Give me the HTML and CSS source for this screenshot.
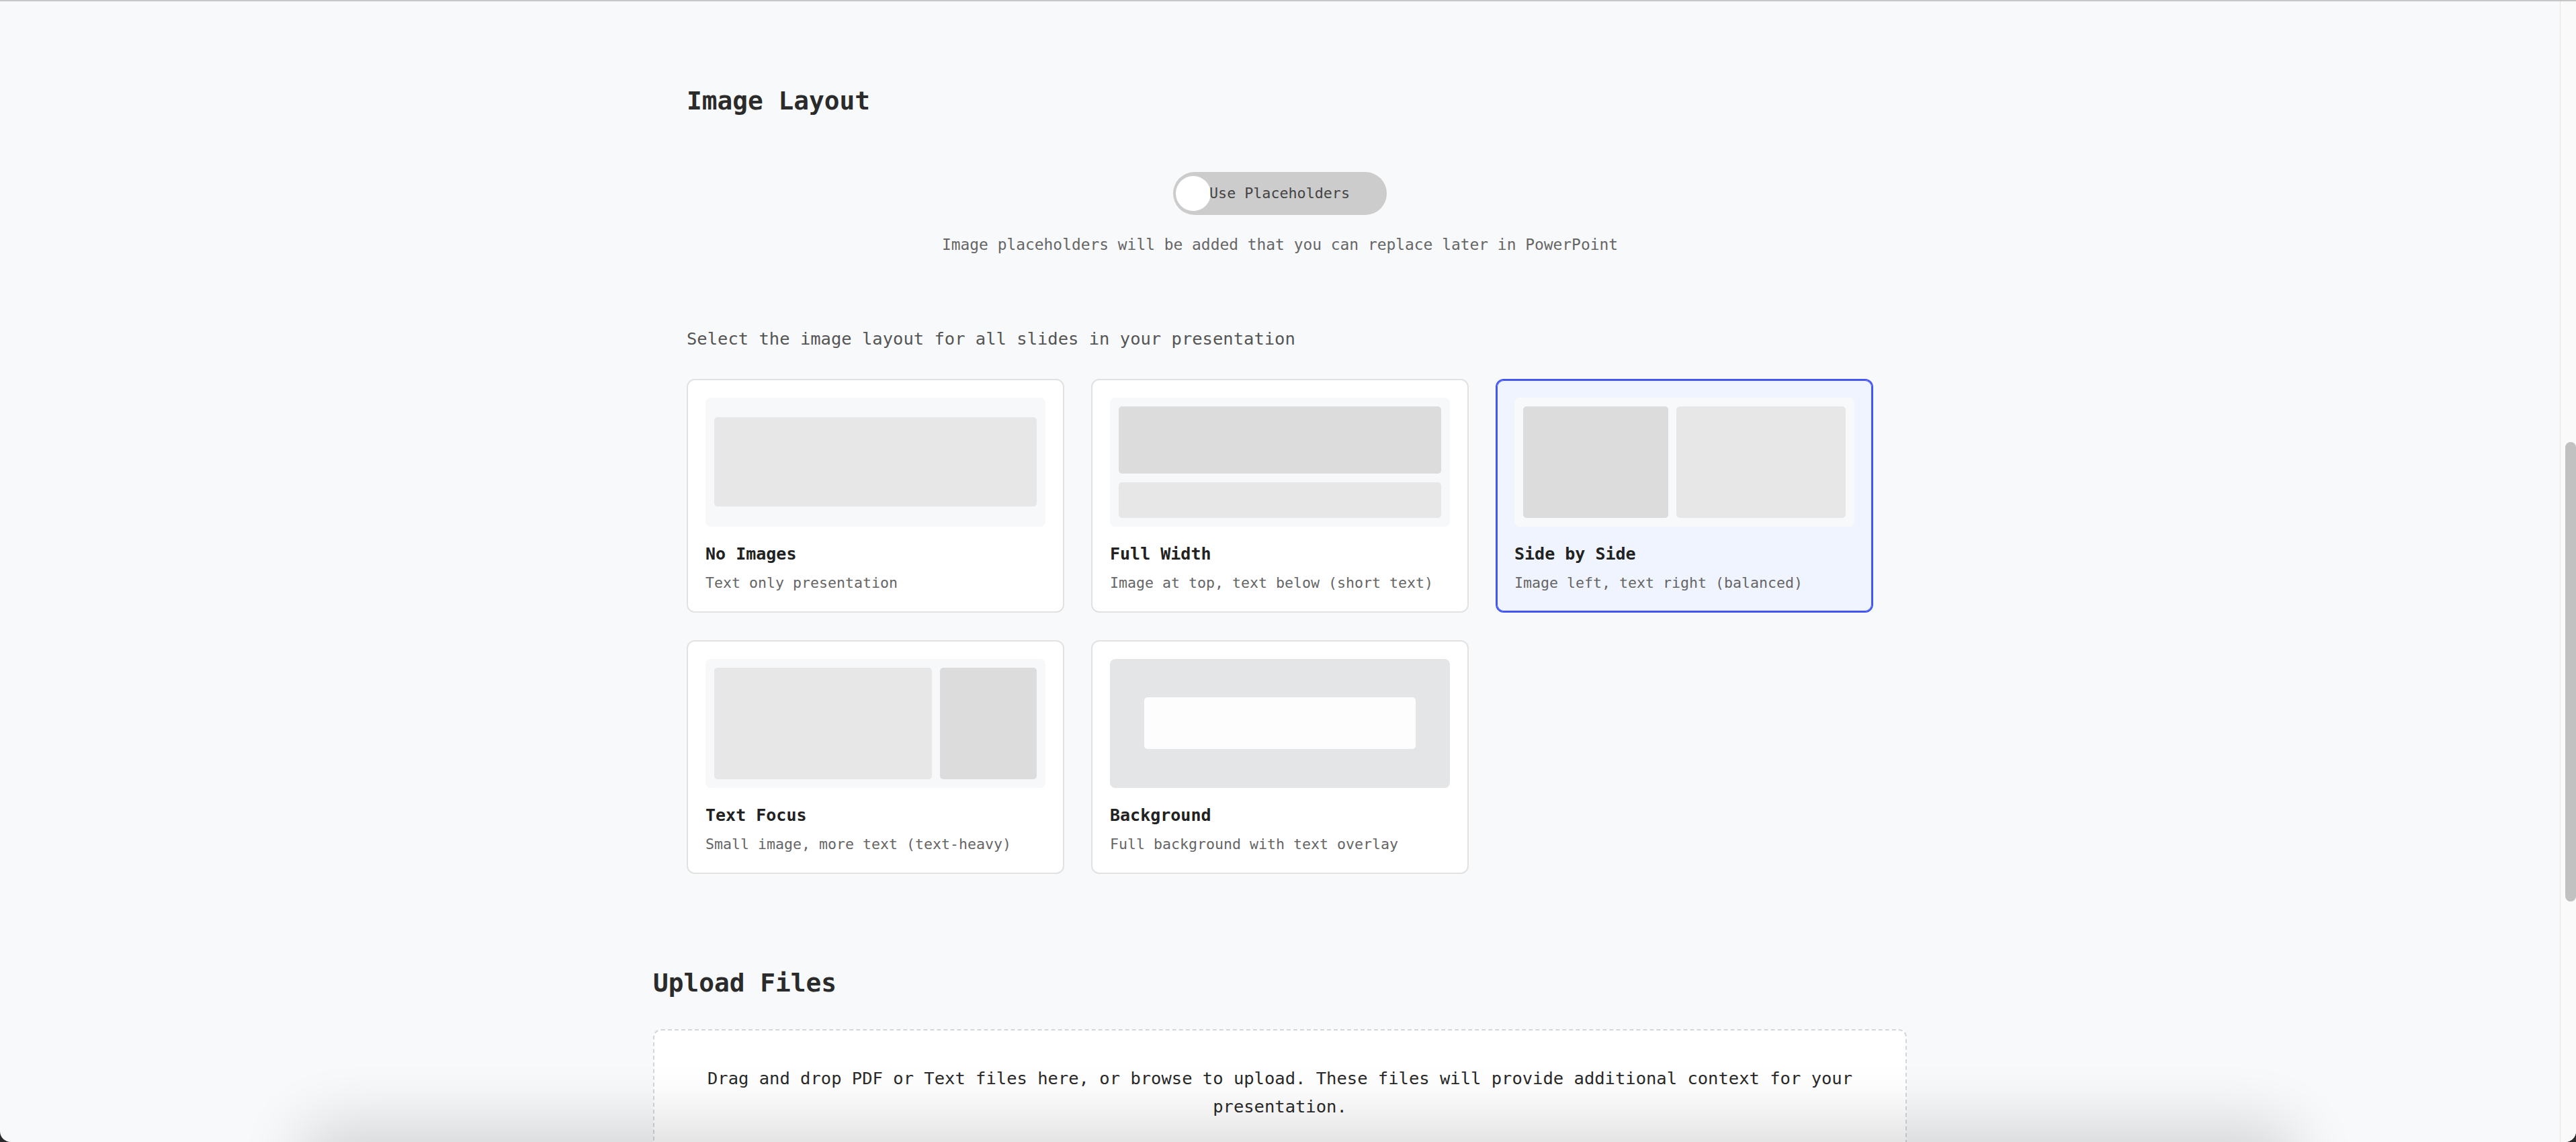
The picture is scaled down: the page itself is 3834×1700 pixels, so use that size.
FILE: index.html
```html
<!DOCTYPE html>
<html lang="en">
<head>
<meta charset="utf-8">
<title>Image Layout</title>
<link rel="stylesheet" href="styles.css">
</head>
<body>
<div class="window">
  <div class="viewport">
    <main class="content">
      <section class="image-layout">
        <h2 class="section-title">Image Layout</h2>
        <div class="toggle-row">
          <div class="toggle">
            <span class="knob"></span>
            <span class="toggle-label">Use Placeholders</span>
          </div>
        </div>
        <p class="toggle-hint">Image placeholders will be added that you can replace later in PowerPoint</p>
        <p class="select-label">Select the image layout for all slides in your presentation</p>
        <div class="layout-grid">
          <div class="card">
            <div class="preview preview-none">
              <div class="blk light full"></div>
            </div>
            <div class="card-title">No Images</div>
            <div class="card-desc">Text only presentation</div>
          </div>
          <div class="card">
            <div class="preview preview-col">
              <div class="blk dark top-img"></div>
              <div class="blk light grow"></div>
            </div>
            <div class="card-title">Full Width</div>
            <div class="card-desc">Image at top, text below (short text)</div>
          </div>
          <div class="card selected">
            <div class="preview">
              <div class="blk dark side-img"></div>
              <div class="blk light grow"></div>
            </div>
            <div class="card-title">Side by Side</div>
            <div class="card-desc">Image left, text right (balanced)</div>
          </div>
          <div class="card">
            <div class="preview">
              <div class="blk light grow"></div>
              <div class="blk dark small-img"></div>
            </div>
            <div class="card-title">Text Focus</div>
            <div class="card-desc">Small image, more text (text-heavy)</div>
          </div>
          <div class="card">
            <div class="preview preview-bg">
              <div class="overlay"></div>
            </div>
            <div class="card-title">Background</div>
            <div class="card-desc">Full background with text overlay</div>
          </div>
        </div>
      </section>
      <section class="upload">
        <h2 class="section-title">Upload Files</h2>
        <div class="dropzone">
          <p class="drop-text">Drag and drop PDF or Text files here, or browse to upload. These files will provide additional context for your presentation.</p>
        </div>
      </section>
    </main>
  </div>
  <div class="scrollbar"><div class="thumb"></div></div>
  <div class="dock-shadow"></div>
</div>
</body>
</html>
```
FILE: styles.css
```css
html, body {
  margin: 0;
  padding: 0;
  height: 100%;
  background: #2a2a2c;
}

body {
  font-family: "DejaVu Sans Mono", "Liberation Mono", monospace;
  color: #2a2a2a;
}

.window {
  position: relative;
  display: flex;
  height: 100vh;
  box-sizing: border-box;
  border-top: 2px solid #c7c7c9;
  border-radius: 0 0 16px 16px;
  overflow: hidden;
  background: #f8f9fa;
}

.viewport {
  flex: 1;
  overflow: hidden;
}

.scrollbar {
  width: 23px;
  border-left: 1px solid #e6e6e7;
  background: #fafafa;
  flex-shrink: 0;
}

.thumb {
  margin-top: 656px;
  margin-left: 7px;
  width: 16px;
  height: 684px;
  border-radius: 8px;
  background: #c1c1c1;
}

.content {
  width: 1866px;
  margin: 0 auto;
}

.image-layout {
  padding: 124.5px 50px 0;
}

.section-title {
  margin: 0;
  font-size: 37.8px;
  line-height: 46px;
  font-weight: bold;
  color: #2b2b2b;
}

.toggle-row {
  display: flex;
  justify-content: center;
  margin-top: 83.2px;
}

.toggle {
  position: relative;
  display: flex;
  align-items: center;
  height: 64px;
  padding: 0 55px 0 54px;
  border-radius: 32px;
  background: #cccccc;
}

.knob {
  position: absolute;
  left: 4px;
  top: 6px;
  width: 52px;
  height: 52px;
  border-radius: 50%;
  background: #ffffff;
}

.toggle-label {
  position: relative;
  font-size: 21.7px;
  line-height: 28px;
  color: #444;
}

.toggle-hint {
  margin: 29.3px 0 0;
  text-align: center;
  font-size: 22.9px;
  line-height: 30px;
  color: #666;
}

.select-label {
  margin: 109.1px 0 0;
  font-size: 25.5px;
  line-height: 32px;
  color: #555;
}

.layout-grid {
  margin-top: 43.6px;
  display: grid;
  grid-template-columns: repeat(3, 1fr);
  gap: 41px 40px;
}

.card {
  border: 2px solid #e2e2e2;
  border-radius: 12px;
  background: #ffffff;
  padding: 26px 26px 28px;
}

.card.selected {
  border-color: #4356f5;
  background: #f0f4ff;
  box-shadow: 0 0 0 1px #4356f5 inset;
}

.preview {
  height: 192px;
  box-sizing: border-box;
  border-radius: 8px;
  background: #f7f8f9;
  padding: 13px;
  display: flex;
  gap: 12px;
}

.selected .preview {
  background: #f8f9fb;
}

.preview-none {
  align-items: center;
}

.preview-col {
  flex-direction: column;
  gap: 13px;
}

.blk {
  border-radius: 5px;
}

.blk.light { background: #e7e7e7; }
.blk.dark { background: #dcdcdc; }

.blk.full {
  flex: 1;
  height: 133px;
}

.blk.grow { flex: 1; }

.blk.top-img { height: 100px; }

.blk.side-img { width: 45%; }

.blk.small-img { width: 30%; }

.preview-bg {
  background: #e4e5e7;
  align-items: center;
  justify-content: center;
  padding: 0;
}

.overlay {
  width: 80%;
  height: 40%;
  border-radius: 5px;
  background: rgba(255, 255, 255, 0.9);
}

.card-title {
  margin-top: 25px;
  font-size: 25px;
  line-height: 32px;
  font-weight: bold;
  color: #222;
}

.card-desc {
  margin-top: 13px;
  font-size: 21.6px;
  line-height: 28px;
  color: #666;
}

.upload {
  padding-top: 139px;
}

.dropzone {
  margin-top: 46px;
  border: 2px dashed #d6d6d6;
  border-radius: 12px;
  background: #ffffff;
  padding: 51.6px 64px;
}

.drop-text {
  margin: 0;
  text-align: center;
  font-size: 25.5px;
  line-height: 41.6px;
  color: #2a2a2a;
}

.dock-shadow {
  position: absolute;
  left: 470px;
  right: 440px;
  bottom: -60px;
  height: 60px;
  border-radius: 30px;
  background: #d8d9db;
  box-shadow: 0 0 90px 30px rgba(0, 0, 0, 0.14);
}
```
